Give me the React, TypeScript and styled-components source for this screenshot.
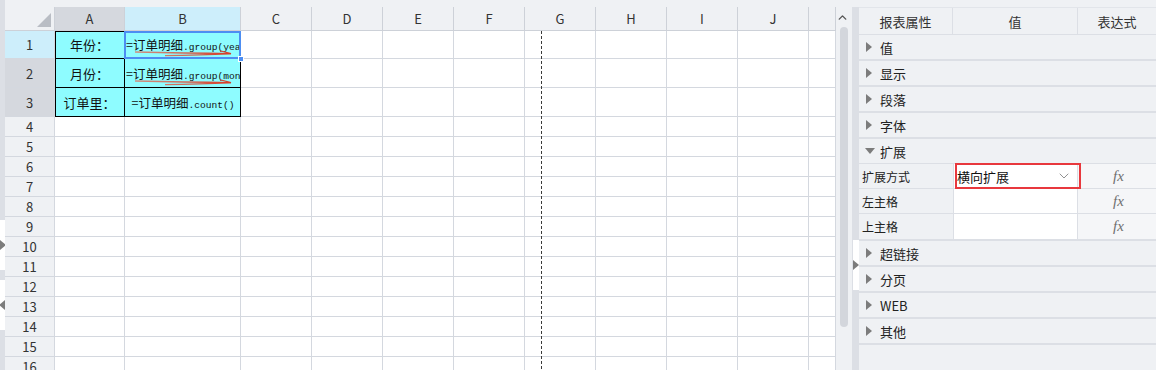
import styled, { createGlobalStyle } from "styled-components";
import { ChevronDown, ChevronUp } from "lucide-react";

const GlobalStyle = createGlobalStyle`
  html, body { margin: 0; padding: 0; background: #eff1f4; }
  body { font-family: "Noto Sans CJK SC", "Liberation Sans", sans-serif; color: #222; }
  * { box-sizing: border-box; }
`;

const COLS = ["A", "B", "C", "D", "E", "F", "G", "H", "I", "J"];
const ROWS = Array.from({ length: 16 }, (_, i) => i + 1);

type Tone = "plain" | "sel" | "cur";

const headBg = (t: Tone) => (t === "cur" ? "#cdeefb" : t === "sel" ? "#d5d8de" : "#eff1f4");

export default function App() {
  return (
    <>
      <GlobalStyle />
      <Page>
        <EdgeStrip>
          <StripPart $h={220} />
          <StripPart $h={50} $white>
            <Tri $dir="right" />
          </StripPart>
          <StripPart $h={10} />
          <StripPart $h={50} $white>
            <Tri $dir="left" />
          </StripPart>
          <StripPart $h={40} />
        </EdgeStrip>
        <Workspace>
          <SheetArea>
            <Sheet>
              <Corner>
                <CornerMark />
              </Corner>
              {COLS.map((c) => (
                <ColHead key={c} $tone={c === "B" ? "cur" : c === "A" ? "sel" : "plain"}>
                  {c}
                </ColHead>
              ))}
              <ColHead $tone="plain" />
              {ROWS.map((r) => (
                <SheetRow key={r} row={r} />
              ))}
            </Sheet>
            <PageBreak />
          </SheetArea>
          <ScrollBar>
            <ScrollBtn>
              <ChevronUp size={13} strokeWidth={2.6} color="#555" />
            </ScrollBtn>
            <Thumb />
          </ScrollBar>
          <Divider>
            <StripPart $h={233} $dark />
            <StripPart $h={50} $white>
              <Tri $dir="right" />
            </StripPart>
            <StripPart $h={80} $dark />
          </Divider>
          <Panel>
            <PanelHead>
              <HeadCell>报表属性</HeadCell>
              <HeadCell>值</HeadCell>
              <HeadCell $last>表达式</HeadCell>
            </PanelHead>
            {["值", "显示", "段落", "字体"].map((s) => (
              <Section key={s}>
                <Caret />
                {s}
              </Section>
            ))}
            <Section $open>
              <Caret $open />
              扩展
            </Section>
            <PropList>
              <PropRow>
                <PropLabel>扩展方式</PropLabel>
                <PropValue>
                  <Highlight />
                  <span>横向扩展</span>
                  <ChevronDown size={16} strokeWidth={1.4} color="#8a8a8a" />
                </PropValue>
                <PropFx>fx</PropFx>
              </PropRow>
              <PropRow>
                <PropLabel>左主格</PropLabel>
                <PropValue />
                <PropFx>fx</PropFx>
              </PropRow>
              <PropRow $last>
                <PropLabel>上主格</PropLabel>
                <PropValue />
                <PropFx>fx</PropFx>
              </PropRow>
            </PropList>
            {["超链接", "分页", "WEB", "其他"].map((s) => (
              <Section key={s}>
                <Caret />
                {s}
              </Section>
            ))}
          </Panel>
        </Workspace>
      </Page>
    </>
  );
}

const DragArrow = ({ id }: { id: string }) => (
  <ArrowSvg width="100" height="8" viewBox="0 0 100 8">
    <defs>
      <linearGradient id={id} gradientUnits="userSpaceOnUse" x1="0" x2="100" y1="0" y2="0">
        <stop offset="0" stopColor="#e26a55" stopOpacity="0.75" />
        <stop offset="1" stopColor="#d63a26" stopOpacity="1" />
      </linearGradient>
    </defs>
    <path d="M0 3 Q50 4.2 96 4.6" stroke={`url(#${id})`} strokeWidth="1.4" fill="none" />
    <path d="M30 6.6 Q65 6.2 96 4.6 L85 1.8" stroke={`url(#${id})`} strokeWidth="1.1" fill="none" />
  </ArrowSvg>
);

const SheetRow = ({ row }: { row: number }) => {
  const block = row <= 3;
  const texts: Record<number, [string, React.ReactNode]> = {
    1: ["年份：", <>=订单明细<Code>.group(yea</Code></>],
    2: ["月份：", <>=订单明细<Code>.group(mon</Code></>],
    3: ["订单里：", <>=订单明细<Code>.count()</Code></>],
  };
  return (
    <>
      <RowHead $tone={row === 1 ? "cur" : row <= 3 ? "sel" : "plain"}>{row}</RowHead>
      {COLS.map((c, ci) => {
        const inBlock = block && ci < 2;
        return (
          <Cell key={c} $cyan={inBlock} $left={inBlock && ci === 0} $top={inBlock && row === 1}>
            {inBlock && ci === 0 && <CellText>{texts[row][0]}</CellText>}
            {inBlock && ci === 1 && (
              <Formula $center={row === 3}>{texts[row][1]}</Formula>
            )}
            {inBlock && ci === 1 && row < 3 && <DragArrow id={`arrow${row}`} />}
            {inBlock && ci === 1 && row === 1 && (
              <Selection>
                <Handle />
              </Selection>
            )}
          </Cell>
        );
      })}
      <Cell />
    </>
  );
};

const Page = styled.div`
  display: flex;
  width: 1156px;
  height: 370px;
  overflow: hidden;
  background: #eff1f4;
`;

const EdgeStrip = styled.div`
  width: 5px;
  display: flex;
  flex-direction: column;
  flex-shrink: 0;
`;

const StripPart = styled.div<{ $h: number; $white?: boolean; $dark?: boolean }>`
  height: ${(p) => p.$h}px;
  flex-shrink: 0;
  background: ${(p) => (p.$white ? "#ffffff" : "#dcdfe5")};
  display: flex;
  align-items: center;
  justify-content: flex-start;
`;

const Tri = styled.div<{ $dir: "left" | "right" }>`
  width: 0;
  height: 0;
  border-top: 5px solid transparent;
  border-bottom: 5px solid transparent;
  ${(p) =>
    p.$dir === "right"
      ? "border-left: 6px solid #7c7c7c;"
      : "border-right: 6px solid #7c7c7c; margin-left: -1px;"}
`;

const Workspace = styled.div`
  display: flex;
  flex: 1;
  padding-top: 7px;
  height: 370px;
`;

const SheetArea = styled.div`
  position: relative;
  width: 831px;
  height: 363px;
  overflow: hidden;
  background: #fff;
  flex-shrink: 0;
`;

const Sheet = styled.div`
  display: grid;
  grid-template-columns: 50px 70px 116px repeat(8, 71px) 1fr;
  grid-template-rows: 24px 28px 29px 29px repeat(13, 20px);
  font-size: 13px;
`;

const ColHead = styled.div<{ $tone: Tone }>`
  background: ${(p) => headBg(p.$tone)};
  border-right: 1px solid #cdd1d8;
  border-bottom: 1px solid #cdd1d8;
  display: flex;
  align-items: center;
  justify-content: center;
  color: #333;
  font-size: 13px;
`;

const Corner = styled.div`
  position: relative;
  background: #eff1f4;
  border-right: 1px solid #cdd1d8;
  border-bottom: 1px solid #cdd1d8;
`;

const CornerMark = styled.div`
  position: absolute;
  right: 3px;
  bottom: 3px;
  width: 0;
  height: 0;
  border-left: 14px solid transparent;
  border-bottom: 14px solid #b9bdc4;
`;

const RowHead = styled.div<{ $tone: Tone }>`
  background: ${(p) => headBg(p.$tone)};
  border-right: 1px solid #d4d8df;
  border-bottom: 1px solid #d4d8df;
  display: flex;
  align-items: center;
  justify-content: center;
  color: #333;
  font-size: 13px;
  line-height: 1;
`;

const Cell = styled.div<{ $cyan?: boolean; $left?: boolean; $top?: boolean }>`
  position: relative;
  background: ${(p) => (p.$cyan ? "#8efcff" : "#ffffff")};
  border-right: 1px solid ${(p) => (p.$cyan ? "#000" : "#d4d8df")};
  border-bottom: 1px solid ${(p) => (p.$cyan ? "#000" : "#d4d8df")};
  box-shadow: ${(p) =>
    [p.$left ? "inset 1px 0 0 #000" : "", p.$top ? "inset 0 1px 0 #000" : ""]
      .filter(Boolean)
      .join(", ") || "none"};
  display: flex;
  align-items: center;
  justify-content: center;
  min-width: 0;
`;

const CellText = styled.span`
  font-size: 13px;
  color: #111;
`;

const Formula = styled.div<{ $center?: boolean }>`
  width: 100%;
  overflow: hidden;
  white-space: nowrap;
  font-size: 12.5px;
  color: #111;
  text-align: ${(p) => (p.$center ? "center" : "left")};
  padding-left: 1px;
`;

const Code = styled.span`
  font-family: "Liberation Mono", "DejaVu Sans Mono", monospace;
  font-size: 9.6px;
`;

const ArrowSvg = styled.svg`
  position: absolute;
  left: 10px;
  bottom: 1px;
  pointer-events: none;
  z-index: 1;
`;

const Selection = styled.div`
  position: absolute;
  left: -1px;
  top: 0;
  right: -1px;
  bottom: -1px;
  border: 2px solid #4d8ef2;
  pointer-events: none;
  z-index: 2;
`;

const Handle = styled.div`
  position: absolute;
  right: -5px;
  bottom: -5px;
  width: 6px;
  height: 6px;
  background: #4d8ef2;
  border: 1px solid #fff;
`;

const PageBreak = styled.div`
  position: absolute;
  left: 536px;
  top: 24px;
  bottom: 0;
  width: 1px;
  background: repeating-linear-gradient(to bottom, #3a3a3a 0 3px, transparent 3px 5px);
`;

const ScrollBar = styled.div`
  width: 16px;
  flex-shrink: 0;
  background: #eff1f4;
  display: flex;
  flex-direction: column;
  align-items: center;
`;

const ScrollBtn = styled.div`
  height: 20px;
  width: 16px;
  display: flex;
  align-items: center;
  justify-content: center;
  margin-left: -3px;
`;

const Thumb = styled.div`
  width: 8px;
  height: 300px;
  border-radius: 4px;
  background: #d3d6dc;
`;

const Divider = styled.div`
  width: 7px;
  flex-shrink: 0;
  display: flex;
  flex-direction: column;
  padding-left: 1px;
  background: #dcdfe5;
`;

const Panel = styled.div`
  flex: 1;
  background: #eff1f4;
  display: flex;
  flex-direction: column;
`;

const PanelHead = styled.div`
  display: grid;
  grid-template-columns: 94px 125px 1fr;
  height: 28px;
  border-bottom: 1px solid #dcdfe5;
  border-top: 1px solid #e2e5ea;
`;

const HeadCell = styled.div<{ $last?: boolean }>`
  display: flex;
  align-items: center;
  justify-content: center;
  font-size: 13px;
  color: #333;
  border-right: ${(p) => (p.$last ? "none" : "1px solid #dcdfe5")};
`;

const Section = styled.div<{ $open?: boolean }>`
  height: ${(p) => (p.$open ? 25 : 26)}px;
  display: flex;
  align-items: center;
  gap: ${(p) => (p.$open ? 5 : 8)}px;
  padding-left: ${(p) => (p.$open ? 6 : 7)}px;
  font-size: 13px;
  color: #222;
  border-bottom: ${(p) => (p.$open ? "1px" : "2px")} solid #dcdfe5;
  flex-shrink: 0;
`;

const Caret = styled.span<{ $open?: boolean }>`
  width: 0;
  height: 0;
  ${(p) =>
    p.$open
      ? `border-left: 5px solid transparent;
         border-right: 5px solid transparent;
         border-top: 6px solid #7c7c7c;`
      : `border-top: 5px solid transparent;
         border-bottom: 5px solid transparent;
         border-left: 6px solid #7c7c7c;`}
`;

const PropList = styled.div`
  display: flex;
  flex-direction: column;
  border-bottom: 2px solid #dcdfe5;
`;

const PropRow = styled.div<{ $last?: boolean }>`
  display: grid;
  grid-template-columns: 94px 125px 1fr;
  height: 25px;
  border-bottom: ${(p) => (p.$last ? "none" : "1px solid #dcdfe5")};
`;

const PropLabel = styled.div`
  display: flex;
  align-items: center;
  padding-left: 3px;
  font-size: 12px;
  color: #222;
`;

const PropValue = styled.div`
  position: relative;
  background: #fff;
  border-left: 1px solid #dcdfe5;
  border-right: 1px solid #dcdfe5;
  display: flex;
  align-items: center;
  justify-content: space-between;
  padding: 0 5px 0 3px;
  font-size: 13px;
  color: #111;
`;

const Highlight = styled.div`
  position: absolute;
  left: 1px;
  top: -1px;
  right: -4px;
  bottom: -1px;
  border: 2px solid #e8383d;
  pointer-events: none;
`;

const PropFx = styled.div`
  background: #f5f6f8;
  display: flex;
  align-items: center;
  justify-content: center;
  font-family: "Liberation Serif", "DejaVu Serif", serif;
  font-style: italic;
  font-size: 15px;
  color: #6f6f6f;
  padding-left: 3px;
`;
